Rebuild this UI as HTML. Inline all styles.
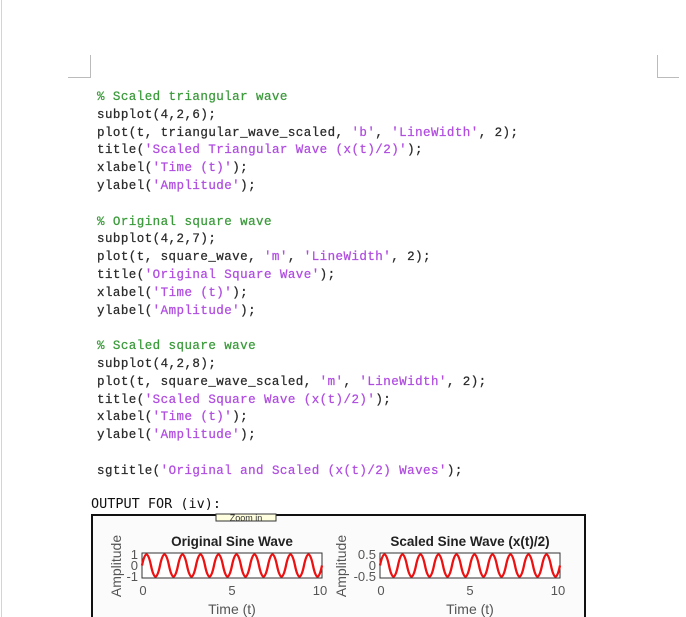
<!DOCTYPE html>
<html><head><style>
body{margin:0;width:686px;height:617px;background:#fff;position:relative;overflow:hidden}
.lb{position:absolute;left:1px;top:0;width:1px;height:617px;background:#d4d4d4}
.code{position:absolute;left:97px;font-family:"Liberation Mono",monospace;font-size:12.5px;letter-spacing:0.45px;color:#2a2a2a;white-space:pre;line-height:17.8px;-webkit-text-stroke:0.25px #2a2a2a}
.c{color:#3a9a3a;-webkit-text-stroke:0.25px #3a9a3a}.s{color:#b04ce0;-webkit-text-stroke:0.25px #b04ce0}
.out{position:absolute;left:91px;top:496px;font-family:"DejaVu Sans Mono",monospace;font-size:13.5px;color:#111;white-space:pre}
</style></head><body>
<div class="lb"></div>
<div style="position:absolute;left:90px;top:55px;width:1px;height:22px;background:#bbb"></div>
<div style="position:absolute;left:68px;top:77px;width:23px;height:1px;background:#bbb"></div>
<div style="position:absolute;left:657px;top:55px;width:1px;height:22px;background:#bbb"></div>
<div style="position:absolute;left:657px;top:77px;width:22px;height:1px;background:#bbb"></div>
<div class="code" style="top:89px"><span class="c">% Scaled triangular wave</span>
subplot(4,2,6);
plot(t, triangular_wave_scaled, <span class="s">'b'</span>, <span class="s">'LineWidth'</span>, 2);
title(<span class="s">'Scaled Triangular Wave (x(t)/2)'</span>);
xlabel(<span class="s">'Time (t)'</span>);
ylabel(<span class="s">'Amplitude'</span>);

<span class="c">% Original square wave</span>
subplot(4,2,7);
plot(t, square_wave, <span class="s">'m'</span>, <span class="s">'LineWidth'</span>, 2);
title(<span class="s">'Original Square Wave'</span>);
xlabel(<span class="s">'Time (t)'</span>);
ylabel(<span class="s">'Amplitude'</span>);

<span class="c">% Scaled square wave</span>
subplot(4,2,8);
plot(t, square_wave_scaled, <span class="s">'m'</span>, <span class="s">'LineWidth'</span>, 2);
title(<span class="s">'Scaled Square Wave (x(t)/2)'</span>);
xlabel(<span class="s">'Time (t)'</span>);
ylabel(<span class="s">'Amplitude'</span>);

sgtitle(<span class="s">'Original and Scaled (x(t)/2) Waves'</span>);</div>
<div class="out">OUTPUT FOR (iv):</div>
<svg style="position:absolute;left:0;top:0" width="686" height="617" font-family="Liberation Sans, sans-serif">
<rect x="92" y="515" width="493" height="110" fill="#fbfbfb" stroke="#111" stroke-width="2"/>
<rect x="216" y="514" width="60" height="7" fill="#ffffe0" stroke="#333" stroke-width="1"/>
<text x="246" y="521" font-size="9" text-anchor="middle" fill="#333">Zoom in</text>
<g id="a1">
<rect x="142" y="553" width="180" height="25" fill="#fff" stroke="#333"/>
<path fill="none" stroke="#e11" stroke-width="2.3" d="M142,565.5 c3,-14.7 6,-14.7 9,0 s6,14.7 9,0 s6,-14.7 9,0 s6,14.7 9,0 s6,-14.7 9,0 s6,14.7 9,0 s6,-14.7 9,0 s6,14.7 9,0 s6,-14.7 9,0 s6,14.7 9,0 s6,-14.7 9,0 s6,14.7 9,0 s6,-14.7 9,0 s6,14.7 9,0 s6,-14.7 9,0 s6,14.7 9,0 s6,-14.7 9,0 s6,14.7 9,0 s6,-14.7 9,0 s6,14.7 9,0"/>
</g>
<text x="232" y="546" font-size="13.5" font-weight="bold" text-anchor="middle" fill="#222">Original Sine Wave</text>
<g font-size="13" fill="#555" text-anchor="end">
<text x="138" y="559">1</text><text x="138" y="570">0</text><text x="138" y="581">-1</text></g>
<g font-size="13" fill="#555" text-anchor="middle">
<text x="143" y="595">0</text><text x="232" y="595">5</text><text x="320" y="595">10</text>
<text x="232" y="614" font-size="14">Time (t)</text></g>
<text transform="translate(121,566) rotate(-90)" font-size="14" fill="#555" text-anchor="middle">Amplitude</text>
<use href="#a1" x="238"/>
<text x="470" y="546" font-size="13.5" font-weight="bold" text-anchor="middle" fill="#222">Scaled Sine Wave (x(t)/2)</text>
<g font-size="13" fill="#555" text-anchor="end">
<text x="376" y="559">0.5</text><text x="376" y="570">0</text><text x="376" y="581">-0.5</text></g>
<g font-size="13" fill="#555" text-anchor="middle">
<text x="381" y="595">0</text><text x="470" y="595">5</text><text x="558" y="595">10</text>
<text x="470" y="614" font-size="14">Time (t)</text></g>
<text transform="translate(346,566) rotate(-90)" font-size="14" fill="#555" text-anchor="middle">Amplitude</text>
</svg>
</body></html>
